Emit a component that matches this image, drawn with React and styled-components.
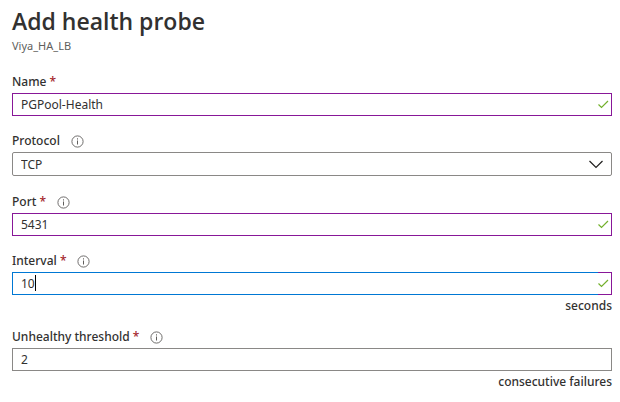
import React from "react";
import styled, { createGlobalStyle } from "styled-components";

const GlobalStyle = createGlobalStyle`
  * { box-sizing: border-box; }
  body {
    margin: 0;
    background: #fff;
    color: #323130;
    font-family: "Segoe UI", "Noto Sans", "Open Sans", sans-serif;
    font-size: 12px;
  }
`;

const Page = styled.main`
  padding: 5px 8px 8px 12px;
`;

const Title = styled.h1`
  margin: 0;
  font-size: 23px;
  line-height: 32px;
  font-weight: 600;
  font-family: "Segoe UI", "Open Sans", "Noto Sans", sans-serif;
`;

const Subtitle = styled.p`
  margin: 0 0 18px;
  font-size: 11px;
  line-height: 18px;
  color: #605e5c;
`;

const Form = styled.form`
  display: flex;
  flex-direction: column;
  gap: 16px;
`;

const Field = styled.div`
  display: flex;
  flex-direction: column;
`;

const LabelRow = styled.div`
  display: flex;
  align-items: center;
  gap: 11px;
  height: 20px;
  padding-bottom: 2px;
`;

const Label = styled.label`
  font-size: 12px;
  line-height: 16px;
  font-weight: 500;
`;

const Required = styled.span`
  color: #a4262c;
`;

const InfoButton = styled.button`
  display: flex;
  padding: 0;
  border: 0;
  background: none;
  color: #605e5c;
`;

const Control = styled.div`
  position: relative;
  display: flex;
  height: ${(p) => p.$height || 23}px;
`;

const TextInput = styled.input`
  flex: 1;
  min-width: 0;
  padding: 0 8px;
  border: 1px solid ${(p) => p.$color};
  border-right-width: ${(p) => (p.$joined ? 0 : 1)}px;
  border-radius: 0;
  outline: 0;
  background: #fff;
  color: #323130;
  font: inherit;
`;

const Status = styled.span`
  display: flex;
  align-items: center;
  width: 14px;
  border: 1px solid #881798;
  border-left: 0;
`;

const Caret = styled.span`
  position: absolute;
  top: 3px;
  left: calc(9px + ${(p) => p.$chars}ch);
  width: 1px;
  height: 16px;
  background: #000;
`;

const Select = styled.select`
  appearance: none;
  flex: 1;
  min-width: 0;
  margin-bottom: ${(p) => p.$gap || 0}px;
  padding: 0 32px 0 8px;
  border: 1px solid #8a8886;
  border-radius: 2px;
  background: #fff;
  color: #323130;
  font: inherit;
`;

const Arrow = styled.svg`
  position: absolute;
  right: 9px;
  top: 8px;
  pointer-events: none;
`;

const Unit = styled.span`
  height: 17px;
  padding-top: 2px;
  text-align: right;
  font-size: 12px;
  font-weight: 500;
  line-height: 17px;
`;

function FieldLabel({ id, text, required, info }) {
  return (
    <LabelRow>
      <Label htmlFor={id}>
        {text} {required && <Required>*</Required>}
      </Label>
      {info && (
        <InfoButton type="button" aria-label={`About ${text}`}>
          <svg width="13" height="13" viewBox="0 0 13 13" fill="none" stroke="currentColor">
            <circle cx="6.5" cy="6.5" r="5.6" strokeWidth="0.9" />
            <path d="M6.5 5.5v4M6.5 3.3v1.2" />
          </svg>
        </InfoButton>
      )}
    </LabelRow>
  );
}

function TextField({ id, label, value, info, required, valid, active, unit }) {
  const color = active ? "#0078d4" : valid ? "#881798" : "#8a8886";
  return (
    <Field>
      <FieldLabel id={id} text={label} required={required} info={info} />
      <Control>
        <TextInput id={id} defaultValue={value} $color={color} $joined={valid} />
        {valid && (
          <Status>
            <svg width="11" height="9" viewBox="0 0 11 9" fill="none" stroke="#73b02c" strokeWidth="1.2">
              <path d="M0.5 4.5L3.5 7.5L10 1" />
            </svg>
          </Status>
        )}
        {active && <Caret $chars={value.length} />}
      </Control>
      {unit && <Unit>{unit}</Unit>}
    </Field>
  );
}

export default function App() {
  return (
    <>
      <GlobalStyle />
      <Page>
        <Title>Add health probe</Title>
        <Subtitle>Viya_HA_LB</Subtitle>
        <Form>
          <TextField id="name" label="Name" value="PGPool-Health" required valid />
          <Field>
            <FieldLabel id="protocol" text="Protocol" info />
            <Control $height={25}>
              <Select id="protocol" defaultValue="TCP" $gap={1}>
                <option>TCP</option>
                <option>HTTP</option>
                <option>HTTPS</option>
              </Select>
              <Arrow width="14" height="9" viewBox="0 0 14 9" fill="none" stroke="#201f1e" strokeWidth="1.2">
                <path d="M0.5 1L7 7.5L13.5 1" />
              </Arrow>
            </Control>
          </Field>
          <TextField id="port" label="Port" value="5431" required info valid />
          <TextField id="interval" label="Interval" value="10" required info valid active unit="seconds" />
          <TextField id="threshold" label="Unhealthy threshold" value="2" required info unit="consecutive failures" />
        </Form>
      </Page>
    </>
  );
}
